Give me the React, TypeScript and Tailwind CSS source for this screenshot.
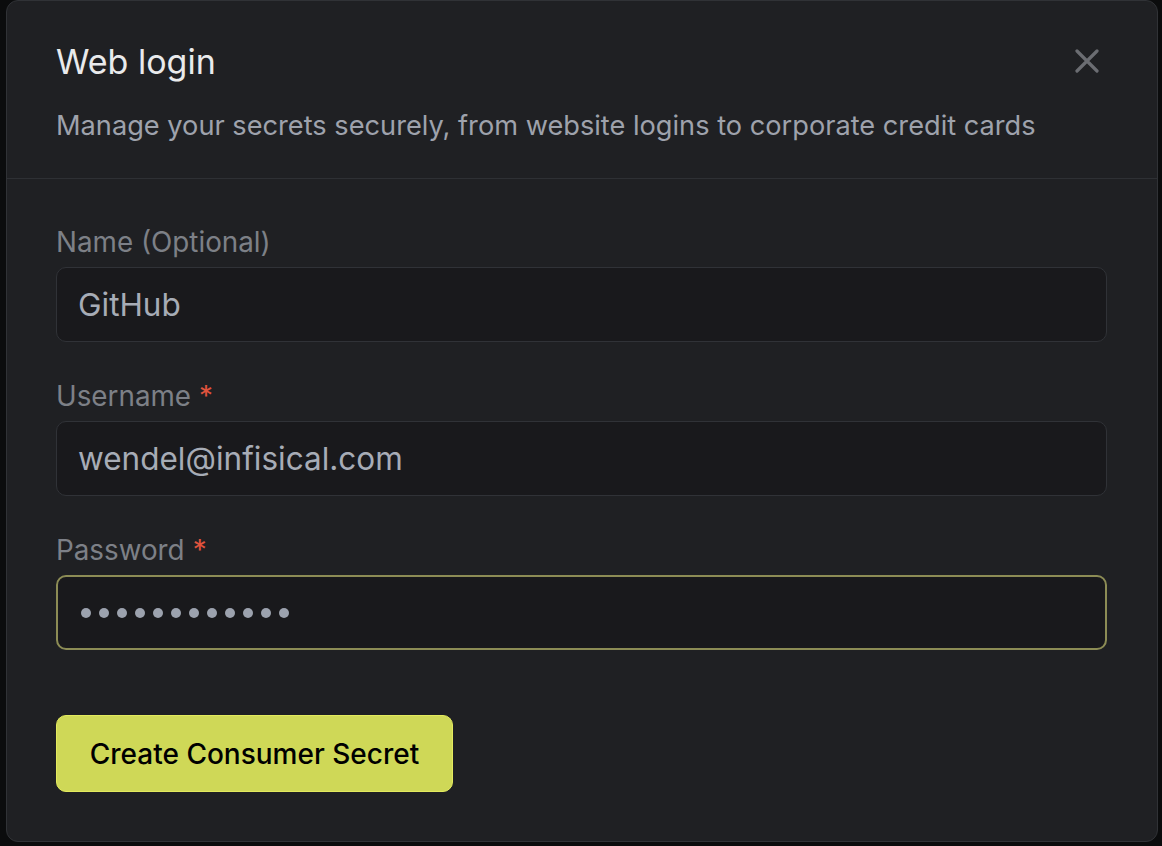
import { useState } from "react";

function CloseIcon() {
  return (
    <svg width="24" height="24" viewBox="0 0 24 24" fill="none" stroke="currentColor" strokeWidth="3.2" strokeLinecap="round">
      <path d="M2 2L22 22M22 2L2 22" />
    </svg>
  );
}

function Field({ label, required, children, focused }: { label: string; required?: boolean; children: React.ReactNode; focused?: boolean }) {
  return (
    <div className="flex flex-col gap-[7px]">
      <label className="text-[27.8px] leading-[36px] text-[#7d8087]">
        {label}
        {required && <span className="ml-[8px] text-[#e0533d]">*</span>}
      </label>
      <div
        className={`h-[75px] w-[1051px] rounded-[10px] border bg-[#19191c] px-[21px] flex items-center ${
          focused ? "border-[#8c8c55] border-[2px] px-[20px]" : "border-[#303237]"
        }`}
      >
        {children}
      </div>
    </div>
  );
}

export default function App() {
  const [name] = useState("GitHub");
  const [user] = useState("wendel@infisical.com");
  const dots = Array.from({ length: 12 });

  return (
    <div className="min-h-screen bg-[#0b0c0d] font-['Inter',sans-serif]">
      <div className="ml-[6px] w-[1152px] h-[842px] rounded-[12px] border border-[#303236] bg-[#1f2023] flex flex-col">
        {/* Header */}
        <div className="pl-[49px] pr-[50px] pt-[41px] pb-[34px] border-b border-[#2e3034] relative">
          <h2 className="text-[34px] leading-[40px] text-[#e9eaec] font-normal">Web login</h2>
          <p className="mt-[26px] text-[27.2px] leading-[36px] text-[#9ea2ac]">
            Manage your secrets securely, from website logins to corporate credit cards
          </p>
          <button className="absolute right-[58px] top-[48px] text-[#6b6d72]">
            <CloseIcon />
          </button>
        </div>

        {/* Form */}
        <div className="pl-[49px] pr-[50px] pt-[45px] flex flex-col gap-[36px]">
          <Field label="Name (Optional)">
            <span className="text-[31.5px] text-[#a7acb6]">{name}</span>
          </Field>
          <Field label="Username" required>
            <span className="text-[31.5px] text-[#a7acb6]">{user}</span>
          </Field>
          <Field label="Password" required focused>
            <div className="flex items-center gap-[8px] pl-[2px]">
              {dots.map((_, i) => (
                <span key={i} className="block w-[10px] h-[10px] rounded-full bg-[#9ca2ae]" />
              ))}
            </div>
          </Field>
        </div>

        <div className="pl-[49px] pr-[50px] pt-[65px]">
          <button className="h-[77px] w-[397px] rounded-[10px] border border-[#e3ea5e] bg-[#cfd857] text-[28px] font-medium text-black">
            Create Consumer Secret
          </button>
        </div>
      </div>
    </div>
  );
}
